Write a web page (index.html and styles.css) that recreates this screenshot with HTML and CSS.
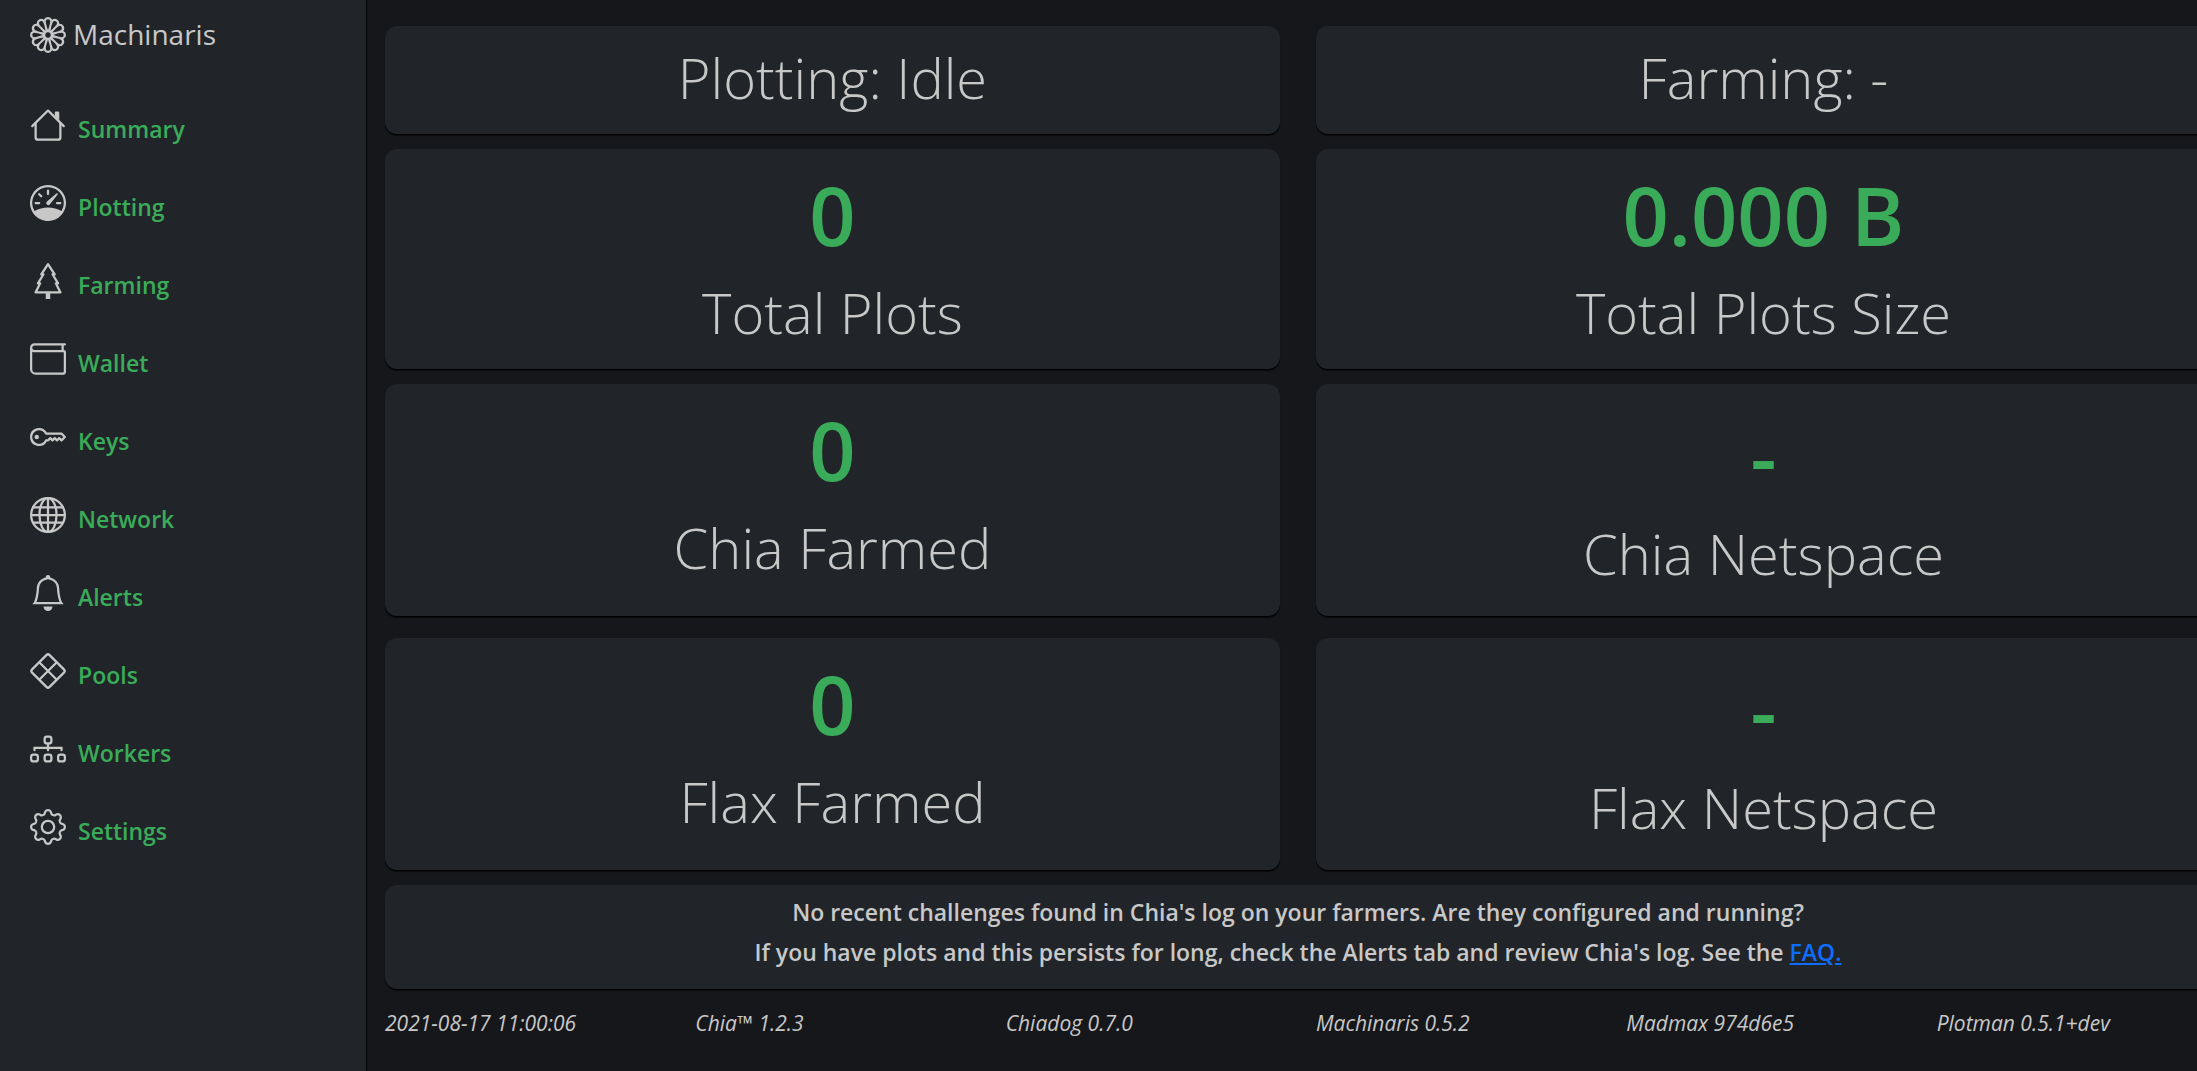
FILE: index.html
```html
<!DOCTYPE html>
<html lang="en">
<head>
  <meta charset="utf-8">
  <title>Machinaris</title>
  <meta name="viewport" content="width=device-width, initial-scale=1">
  <link rel="stylesheet" href="styles.css">
</head>
<body>
  <aside class="sidebar">
    <a class="brand" href="#">
      <svg class="icon" viewBox="0 0 16 16" aria-hidden="true">
        <defs>
          <path id="petal" d="M8 1a1 1 0 0 0-1 1.03c0 .6.4 2.2.955 3.588L8 5.762l.045-.144C8.6 4.2 9 2.6 9 2.03A1 1 0 0 0 8 1z"/>
        </defs>
        <path d="M6.174 1.184a2 2 0 0 1 3.652 0A2 2 0 0 1 12.99 3.01a2 2 0 0 1 1.826 3.164 2 2 0 0 1 0 3.652 2 2 0 0 1-1.826 3.164 2 2 0 0 1-3.164 1.826 2 2 0 0 1-3.652 0A2 2 0 0 1 3.01 12.99a2 2 0 0 1-1.826-3.164 2 2 0 0 1 0-3.652A2 2 0 0 1 3.01 3.01a2 2 0 0 1 3.164-1.826z"/>
        <g class="cutout">
          <use href="#petal"/>
          <use href="#petal" transform="rotate(30 8 8)"/>
          <use href="#petal" transform="rotate(60 8 8)"/>
          <use href="#petal" transform="rotate(90 8 8)"/>
          <use href="#petal" transform="rotate(120 8 8)"/>
          <use href="#petal" transform="rotate(150 8 8)"/>
          <use href="#petal" transform="rotate(180 8 8)"/>
          <use href="#petal" transform="rotate(210 8 8)"/>
          <use href="#petal" transform="rotate(240 8 8)"/>
          <use href="#petal" transform="rotate(270 8 8)"/>
          <use href="#petal" transform="rotate(300 8 8)"/>
          <use href="#petal" transform="rotate(330 8 8)"/>
          <circle cx="8" cy="8" r="1.2"/>
        </g>
      </svg>
      <span>Machinaris</span>
    </a>
    <nav class="nav">
      <a class="nav-link" href="#">
        <svg class="icon" viewBox="0 0 16 16" aria-hidden="true"><path d="M2 13.5V7h1v6.5a.5.5 0 0 0 .5.5h9a.5.5 0 0 0 .5-.5V7h1v6.5a1.5 1.5 0 0 1-1.5 1.5h-9A1.5 1.5 0 0 1 2 13.5zm11-11V6l-2-2V2.5a.5.5 0 0 1 .5-.5h1a.5.5 0 0 1 .5.5z"/><path d="M7.293 1.5a1 1 0 0 1 1.414 0l6.647 6.646a.5.5 0 0 1-.708.708L8 2.207 1.354 8.854a.5.5 0 1 1-.708-.708L7.293 1.5z"/></svg>
        <span>Summary</span>
      </a>
      <a class="nav-link" href="#">
        <svg class="icon" viewBox="0 0 16 16" aria-hidden="true"><path d="M8 2a.5.5 0 0 1 .5.5V4a.5.5 0 0 1-1 0V2.5A.5.5 0 0 1 8 2zM3.732 3.732a.5.5 0 0 1 .707 0l.915.914a.5.5 0 1 1-.708.708l-.914-.915a.5.5 0 0 1 0-.707zM2 8a.5.5 0 0 1 .5-.5h1.586a.5.5 0 0 1 0 1H2.5A.5.5 0 0 1 2 8zm9.5 0a.5.5 0 0 1 .5-.5h1.5a.5.5 0 0 1 0 1H12a.5.5 0 0 1-.5-.5zm.754-4.246a.389.389 0 0 0-.527-.02L7.547 7.31A.91.91 0 1 0 8.85 8.569l3.434-4.297a.389.389 0 0 0-.029-.518z"/><path fill-rule="evenodd" d="M6.664 15.889A8 8 0 1 1 9.336.11a8 8 0 0 1-2.672 15.78zm-4.665-4.283A11.945 11.945 0 0 1 8 10c2.186 0 4.236.585 6.001 1.606a7 7 0 1 0-12.002 0z"/></svg>
        <span>Plotting</span>
      </a>
      <a class="nav-link" href="#">
        <svg class="icon" viewBox="0 0 16 16" aria-hidden="true"><path fill-rule="evenodd" d="M8 0a.5.5 0 0 1 .416.223l3 4.5A.5.5 0 0 1 11 5.5h-.098l2.022 3.235a.5.5 0 0 1-.424.765h-.191l1.638 3.276a.5.5 0 0 1-.447.724H9V16H7v-2.5H2.5a.5.5 0 0 1-.447-.724L3.69 9.5H3.5a.5.5 0 0 1-.424-.765L5.098 5.5H5a.5.5 0 0 1-.416-.777l3-4.5A.5.5 0 0 1 8 0zM5.934 4.5H6a.5.5 0 0 1 .424.765L4.402 8.5H4.5a.5.5 0 0 1 .447.724L3.31 12.5h9.382l-1.638-3.276A.5.5 0 0 1 11.5 8.5h.098L9.576 5.265A.5.5 0 0 1 10 4.5h.066L8 1.401 5.934 4.5z"/></svg>
        <span>Farming</span>
      </a>
      <a class="nav-link" href="#">
        <svg class="icon" viewBox="0 0 16 16" aria-hidden="true"><path fill-rule="evenodd" d="M0 3a2 2 0 0 1 2-2h13.5a.5.5 0 0 1 0 1H15v2a1 1 0 0 1 1 1v8.5a1.5 1.5 0 0 1-1.5 1.5h-12A2.5 2.5 0 0 1 0 12.5V3zm1 1.732V12.5A1.5 1.5 0 0 0 2.5 14h12a.5.5 0 0 0 .5-.5V5H2a1.99 1.99 0 0 1-1-.268zM1 3a1 1 0 0 0 1 1h12V2H2a1 1 0 0 0-1 1z"/></svg>
        <span>Wallet</span>
      </a>
      <a class="nav-link" href="#">
        <svg class="icon" viewBox="0 0 16 16" aria-hidden="true"><path d="M0 8a4 4 0 0 1 7.465-2H14a.5.5 0 0 1 .354.146l1.5 1.5a.5.5 0 0 1 0 .708l-1.5 1.5a.5.5 0 0 1-.708 0L13 9.207l-.646.647a.5.5 0 0 1-.708 0L11 9.207l-.646.647a.5.5 0 0 1-.708 0L9 9.207l-.646.647A.5.5 0 0 1 8 10h-.535A4 4 0 0 1 0 8zm4-3a3 3 0 1 0 2.712 4.285A.5.5 0 0 1 7.163 9h.63l.853-.854a.5.5 0 0 1 .708 0l.646.647.646-.647a.5.5 0 0 1 .708 0l.646.647.646-.647a.5.5 0 0 1 .708 0l.646.647.793-.793-1-1h-6.63a.5.5 0 0 1-.451-.285A3 3 0 0 0 4 5z"/><path d="M4 8a1 1 0 1 1-2 0 1 1 0 0 1 2 0z"/></svg>
        <span>Keys</span>
      </a>
      <a class="nav-link" href="#">
        <svg class="icon icon-line" viewBox="0 0 16 16" aria-hidden="true"><circle cx="8" cy="8" r="7.5"/><ellipse cx="8" cy="8" rx="3.8" ry="7.5"/><path d="M8 .5v15M.5 8h15M1.3 4.6h13.4M1.3 11.4h13.4"/></svg>
        <span>Network</span>
      </a>
      <a class="nav-link" href="#">
        <svg class="icon" viewBox="0 0 16 16" aria-hidden="true"><path fill-rule="evenodd" d="M8 16a2 2 0 0 0 2-2H6a2 2 0 0 0 2 2zM8 1.918l-.797.161A4.002 4.002 0 0 0 4 6c0 .628-.134 2.197-.459 3.742-.16.767-.376 1.566-.663 2.258h10.244c-.287-.692-.502-1.49-.663-2.258C12.134 8.197 12 6.628 12 6a4.002 4.002 0 0 0-3.203-3.92L8 1.917zM14.22 12c.223.447.481.801.78 1H1c.299-.199.557-.553.78-1C2.68 10.2 3 6.88 3 6c0-2.42 1.72-4.44 4.005-4.901a1 1 0 1 1 1.99 0A5.002 5.002 0 0 1 13 6c0 .88.32 4.2 1.22 6z"/></svg>
        <span>Alerts</span>
      </a>
      <a class="nav-link" href="#">
        <svg class="icon icon-line" viewBox="0 0 16 16" aria-hidden="true"><rect x="2.5" y="2.5" width="11" height="11" rx="1" transform="rotate(45 8 8)"/><path d="M4.1 4.1l7.8 7.8M11.9 4.1l-7.8 7.8"/></svg>
        <span>Pools</span>
      </a>
      <a class="nav-link" href="#">
        <svg class="icon icon-line" viewBox="0 0 16 16" aria-hidden="true"><rect x="6.5" y="2.5" width="3" height="3" rx="1"/><rect x=".5" y="10.5" width="3" height="3" rx="1"/><rect x="6.5" y="10.5" width="3" height="3" rx="1"/><rect x="12.5" y="10.5" width="3" height="3" rx="1"/><path stroke-linecap="round" d="M8 6v2.5M2 8.5v-1h12v1"/></svg>
        <span>Workers</span>
      </a>
      <a class="nav-link" href="#">
        <svg class="icon" viewBox="0 0 16 16" aria-hidden="true"><path d="M8 4.754a3.246 3.246 0 1 0 0 6.492 3.246 3.246 0 0 0 0-6.492zM5.754 8a2.246 2.246 0 1 1 4.492 0 2.246 2.246 0 0 1-4.492 0z"/><path d="M9.796 1.343c-.527-1.79-3.065-1.79-3.592 0l-.094.319a.873.873 0 0 1-1.255.52l-.292-.16c-1.64-.892-3.433.902-2.54 2.541l.159.292a.873.873 0 0 1-.52 1.255l-.319.094c-1.79.527-1.79 3.065 0 3.592l.319.094a.873.873 0 0 1 .52 1.255l-.16.292c-.892 1.64.901 3.434 2.541 2.54l.292-.159a.873.873 0 0 1 1.255.52l.094.319c.527 1.79 3.065 1.79 3.592 0l.094-.319a.873.873 0 0 1 1.255-.52l.292.16c1.64.893 3.434-.902 2.54-2.541l-.159-.292a.873.873 0 0 1 .52-1.255l.319-.094c1.79-.527 1.79-3.065 0-3.592l-.319-.094a.873.873 0 0 1-.52-1.255l.16-.292c.893-1.64-.902-3.433-2.541-2.54l-.292.159a.873.873 0 0 1-1.255-.52l-.094-.319zm-2.633.283c.246-.835 1.428-.835 1.674 0l.094.319a1.873 1.873 0 0 0 2.693 1.115l.291-.16c.764-.415 1.6.42 1.184 1.185l-.159.292a1.873 1.873 0 0 0 1.116 2.692l.318.094c.835.246.835 1.428 0 1.674l-.319.094a1.873 1.873 0 0 0-1.115 2.693l.16.291c.415.764-.42 1.6-1.185 1.184l-.291-.159a1.873 1.873 0 0 0-2.693 1.116l-.094.318c-.246.835-1.428.835-1.674 0l-.094-.319a1.873 1.873 0 0 0-2.692-1.115l-.292.16c-.764.415-1.6-.42-1.184-1.185l.159-.291A1.873 1.873 0 0 0 1.945 8.93l-.319-.094c-.835-.246-.835-1.428 0-1.674l.319-.094A1.873 1.873 0 0 0 3.06 4.377l-.16-.292c-.415-.764.42-1.6 1.185-1.184l.292.159a1.873 1.873 0 0 0 2.692-1.115l.094-.319z"/></svg>
        <span>Settings</span>
      </a>
    </nav>
  </aside>

  <main class="main">
    <div class="dashboard">
      <section class="row">
        <div class="card"><h2 class="label">Plotting: Idle</h2></div>
        <div class="card"><h2 class="label">Farming: -</h2></div>
      </section>
      <section class="row">
        <div class="card"><p class="value">0</p><h2 class="label">Total Plots</h2></div>
        <div class="card"><p class="value">0.000 B</p><h2 class="label">Total Plots Size</h2></div>
      </section>
      <section class="row row-chain">
        <div class="card"><p class="value">0</p><h2 class="label">Chia Farmed</h2></div>
        <div class="card card-netspace"><p class="value">-</p><h2 class="label">Chia Netspace</h2></div>
      </section>
      <section class="row row-chain">
        <div class="card"><p class="value">0</p><h2 class="label">Flax Farmed</h2></div>
        <div class="card card-netspace"><p class="value">-</p><h2 class="label">Flax Netspace</h2></div>
      </section>
      <section class="card card-message">
        <p>No recent challenges found in Chia's log on your farmers. Are they configured and running?</p>
        <p>If you have plots and this persists for long, check the Alerts tab and review Chia's log. See the <a href="#">FAQ.</a></p>
      </section>
      <footer class="footer">
        <span>2021-08-17 11:00:06</span>
        <span>Chia™ 1.2.3</span>
        <span>Chiadog 0.7.0</span>
        <span>Machinaris 0.5.2</span>
        <span>Madmax 974d6e5</span>
        <span>Plotman 0.5.1+dev</span>
      </footer>
    </div>
  </main>
</body>
</html>
```
FILE: styles.css
```css
* {
  box-sizing: border-box;
}

body {
  margin: 0;
  min-height: 100vh;
  display: flex;
  background: #16171b;
  color: #c8c8c8;
  font-family: "Segoe UI", "Open Sans", "Noto Sans", sans-serif;
}

h2,
p {
  margin: 0;
}

/* Sidebar */
.sidebar {
  flex: 0 0 367px;
  padding: 17px 30px;
  background: #212529;
  border-right: 1px solid #000;
}

.brand,
.nav-link {
  display: flex;
  text-decoration: none;
}

.brand {
  align-items: flex-start;
  gap: 7px;
  margin-bottom: 54px;
  color: inherit;
  font-size: 28px;
  line-height: 34px;
}

.nav {
  display: flex;
  flex-direction: column;
  gap: 42px;
}

.nav-link {
  align-items: flex-end;
  gap: 12px;
  color: #3aac59;
  font-size: 23px;
  font-weight: 600;
  line-height: 28px;
}

.icon {
  width: 36px;
  height: 36px;
  fill: #c8c8c8;
}

.icon-line {
  fill: none;
  stroke: #c8c8c8;
}

.cutout {
  fill: #212529;
}

/* Dashboard: runs slightly past the right edge, which clips it */
.main {
  flex: 1;
  min-width: 0;
  overflow: hidden;
  padding: 26px 0 18px 18px;
}

.dashboard {
  display: flex;
  flex-direction: column;
  gap: 15px;
  margin-right: -14px;
}

.row {
  display: grid;
  grid-template-columns: 1fr 1fr;
  gap: 36px;
}

.row-chain + .row-chain {
  margin-top: 7px;
}

.card {
  padding: 18px 18px 24px;
  border-radius: 12px;
  background: #212529;
  box-shadow: 0 1px 0 #000, 0 2px 1px rgba(0, 0, 0, 0.5);
  text-align: center;
}

.row-chain .card {
  padding-bottom: 36px;
}

.row-chain .card-netspace {
  padding-top: 24px;
  padding-bottom: 30px;
}

.value {
  margin-bottom: 16px;
  color: #3aac59;
  font-size: 81px;
  font-weight: 600;
  line-height: 96px;
}

.label {
  font-size: 56px;
  font-weight: 300;
  line-height: 66px;
}

.card-message {
  padding: 7px 18px 17px;
  font-size: 23px;
  font-weight: 600;
  line-height: 40px;
}

.card-message a {
  color: #0d6efd;
}

.footer {
  display: grid;
  grid-template-columns: repeat(6, 1fr);
  gap: 36px;
  margin-top: 4px;
  font-size: 21px;
  font-style: italic;
  line-height: 30px;
}
```
